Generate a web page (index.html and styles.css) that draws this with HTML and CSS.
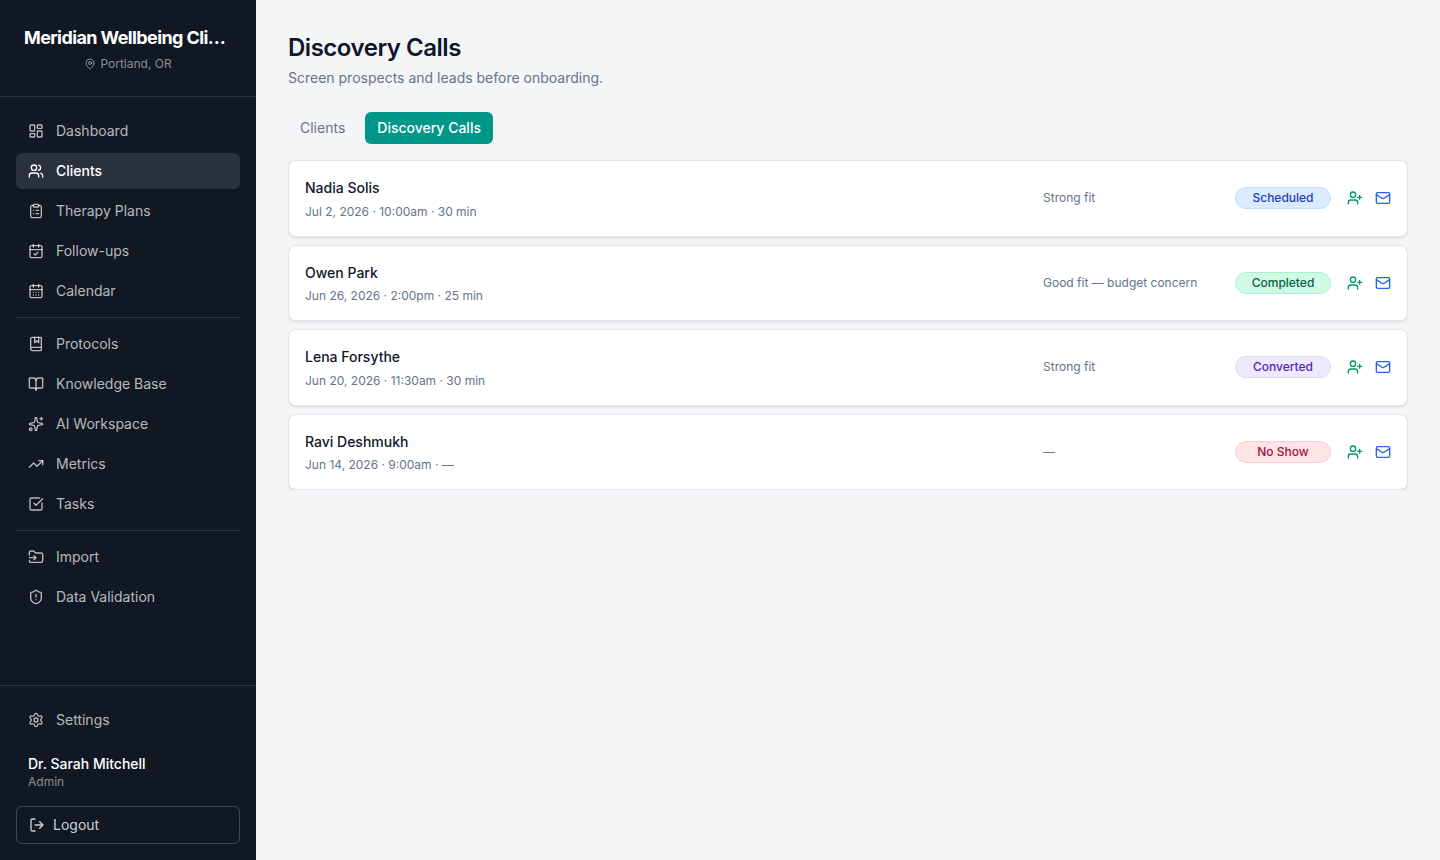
FILE: index.html
```html
<!DOCTYPE html>
<html lang="en">
<head>
<meta charset="utf-8">
<title>Discovery Calls</title>
<link rel="stylesheet" href="styles.css">
</head>
<body>
<svg class="sprite" aria-hidden="true">
  <symbol id="user-plus" viewBox="0 0 24 24"><path d="M16 21v-2a4 4 0 0 0-4-4H6a4 4 0 0 0-4 4v2"/><circle cx="9" cy="7" r="4"/><path d="M19 8v6M22 11h-6"/></symbol>
  <symbol id="mail" viewBox="0 0 24 24"><rect width="20" height="16" x="2" y="4" rx="2"/><path d="m22 7-8.97 5.7a1.94 1.94 0 0 1-2.06 0L2 7"/></symbol>
</svg>
<div class="app">
  <aside class="sidebar">
    <header class="brand">
      <div class="brand-name">Meridian Wellbeing Cli…</div>
      <div class="brand-place">
        <svg class="icon icon-pin" viewBox="0 0 24 24"><path d="M20 10c0 4.993-5.539 10.193-7.399 11.799a1 1 0 0 1-1.202 0C9.539 20.193 4 14.993 4 10a8 8 0 0 1 16 0"/><circle cx="12" cy="10" r="3"/></svg>
        <span>Portland, OR</span>
      </div>
    </header>
    <nav class="nav">
      <a class="nav-item"><svg class="icon" viewBox="0 0 24 24"><rect width="7" height="9" x="3" y="3" rx="1"/><rect width="7" height="5" x="14" y="3" rx="1"/><rect width="7" height="9" x="14" y="12" rx="1"/><rect width="7" height="5" x="3" y="16" rx="1"/></svg>Dashboard</a>
      <a class="nav-item active"><svg class="icon" viewBox="0 0 24 24"><path d="M16 21v-2a4 4 0 0 0-4-4H6a4 4 0 0 0-4 4v2"/><circle cx="9" cy="7" r="4"/><path d="M22 21v-2a4 4 0 0 0-3-3.870M16 3.130a4 4 0 0 1 0 7.750"/></svg>Clients</a>
      <a class="nav-item"><svg class="icon" viewBox="0 0 24 24"><rect width="8" height="4" x="8" y="2" rx="1"/><path d="M16 4h2a2 2 0 0 1 2 2v14a2 2 0 0 1-2 2H6a2 2 0 0 1-2-2V6a2 2 0 0 1 2-2h2M12 11h4M12 16h4M8 11h.01M8 16h.01"/></svg>Therapy Plans</a>
      <a class="nav-item"><svg class="icon" viewBox="0 0 24 24"><path d="M8 2v4M16 2v4"/><rect width="18" height="18" x="3" y="4" rx="2"/><path d="M3 10h18M9 16l2 2 4-4"/></svg>Follow-ups</a>
      <a class="nav-item"><svg class="icon" viewBox="0 0 24 24"><path d="M8 2v4M16 2v4"/><rect width="18" height="18" x="3" y="4" rx="2"/><path d="M3 10h18M8 14h.01M12 14h.01M16 14h.01M8 18h.01M12 18h.01M16 18h.01"/></svg>Calendar</a>
      <hr class="divider">
      <a class="nav-item"><svg class="icon" viewBox="0 0 24 24"><path d="M10 2v8l3-3 3 3V2"/><path d="M4 19.5v-15A2.5 2.5 0 0 1 6.500 2H19a1 1 0 0 1 1 1v18a1 1 0 0 1-1 1H6.500a1 1 0 0 1 0-5H20"/></svg>Protocols</a>
      <a class="nav-item"><svg class="icon" viewBox="0 0 24 24"><path d="M12 7v14"/><path d="M3 18a1 1 0 0 1-1-1V4a1 1 0 0 1 1-1h5a4 4 0 0 1 4 4 4 4 0 0 1 4-4h5a1 1 0 0 1 1 1v13a1 1 0 0 1-1 1h-6a3 3 0 0 0-3 3 3 3 0 0 0-3-3z"/></svg>Knowledge Base</a>
      <a class="nav-item"><svg class="icon" viewBox="0 0 24 24"><path d="M11.017 2.814a1 1 0 0 1 1.966 0l1.051 5.558a2 2 0 0 0 1.594 1.594l5.558 1.051a1 1 0 0 1 0 1.966l-5.558 1.051a2 2 0 0 0-1.594 1.594l-1.051 5.558a1 1 0 0 1-1.966 0l-1.051-5.558a2 2 0 0 0-1.594-1.594l-5.558-1.051a1 1 0 0 1 0-1.966l5.558-1.051a2 2 0 0 0 1.594-1.594z"/><path d="M20 2v4M22 4h-4"/><circle cx="4" cy="20" r="2"/></svg>AI Workspace</a>
      <a class="nav-item"><svg class="icon" viewBox="0 0 24 24"><path d="M16 7h6v6"/><path d="m22 7-8.500 8.500-5-5L2 17"/></svg>Metrics</a>
      <a class="nav-item"><svg class="icon" viewBox="0 0 24 24"><path d="M21 10.500V19a2 2 0 0 1-2 2H5a2 2 0 0 1-2-2V5a2 2 0 0 1 2-2h12.500"/><path d="m9 11 3 3L22 4"/></svg>Tasks</a>
      <hr class="divider">
      <a class="nav-item"><svg class="icon" viewBox="0 0 24 24"><path d="M2 9V5a2 2 0 0 1 2-2h3.900a2 2 0 0 1 1.690.900l.810 1.200a2 2 0 0 0 1.670.900H20a2 2 0 0 1 2 2v10a2 2 0 0 1-2 2H4a2 2 0 0 1-2-2v-1"/><path d="M2 13h10M9 16l3-3-3-3"/></svg>Import</a>
      <a class="nav-item"><svg class="icon" viewBox="0 0 24 24"><path d="M20 13c0 5-3.500 7.500-7.660 8.950a1 1 0 0 1-.670-.010C7.500 20.500 4 18 4 13V6a1 1 0 0 1 1-1c2 0 4.500-1.200 6.240-2.720a1.170 1.170 0 0 1 1.520 0C14.510 3.810 17 5 19 5a1 1 0 0 1 1 1z"/><path d="M12 8v4M12 16h.01"/></svg>Data Validation</a>
    </nav>
    <footer class="account">
      <a class="nav-item"><svg class="icon" viewBox="0 0 24 24"><path d="M9.671 4.136a2.340 2.340 0 0 1 4.659 0 2.340 2.340 0 0 0 3.319 1.915 2.340 2.340 0 0 1 2.330 4.033 2.340 2.340 0 0 0 0 3.831 2.340 2.340 0 0 1-2.330 4.033 2.340 2.340 0 0 0-3.319 1.915 2.340 2.340 0 0 1-4.659 0 2.340 2.340 0 0 0-3.320-1.915 2.340 2.340 0 0 1-2.330-4.033 2.340 2.340 0 0 0 0-3.831A2.340 2.340 0 0 1 6.350 6.051a2.340 2.340 0 0 0 3.319-1.915"/><circle cx="12" cy="12" r="3"/></svg>Settings</a>
      <div class="user">
        <div class="user-name">Dr. Sarah Mitchell</div>
        <div class="user-role">Admin</div>
      </div>
      <button class="logout"><svg class="icon" viewBox="0 0 24 24"><path d="m16 17 5-5-5-5M21 12H9M9 21H5a2 2 0 0 1-2-2V5a2 2 0 0 1 2-2h4"/></svg>Logout</button>
    </footer>
  </aside>
  <main class="main">
    <h1 class="title">Discovery Calls</h1>
    <p class="subtitle">Screen prospects and leads before onboarding.</p>
    <div class="tabs">
      <a class="tab">Clients</a>
      <a class="tab tab-active">Discovery Calls</a>
    </div>
    <section class="calls">
      <article class="call">
        <div class="call-info"><div class="call-name">Nadia Solis</div><div class="call-meta">Jul 2, 2026 · 10:00am · 30 min</div></div>
        <div class="call-note">Strong fit</div>
        <span class="badge badge-scheduled">Scheduled</span>
        <div class="actions"><svg class="icon convert"><use href="#user-plus"/></svg><svg class="icon email"><use href="#mail"/></svg></div>
      </article>
      <article class="call">
        <div class="call-info"><div class="call-name">Owen Park</div><div class="call-meta">Jun 26, 2026 · 2:00pm · 25 min</div></div>
        <div class="call-note">Good fit — budget concern</div>
        <span class="badge badge-completed">Completed</span>
        <div class="actions"><svg class="icon convert"><use href="#user-plus"/></svg><svg class="icon email"><use href="#mail"/></svg></div>
      </article>
      <article class="call">
        <div class="call-info"><div class="call-name">Lena Forsythe</div><div class="call-meta">Jun 20, 2026 · 11:30am · 30 min</div></div>
        <div class="call-note">Strong fit</div>
        <span class="badge badge-converted">Converted</span>
        <div class="actions"><svg class="icon convert"><use href="#user-plus"/></svg><svg class="icon email"><use href="#mail"/></svg></div>
      </article>
      <article class="call">
        <div class="call-info"><div class="call-name">Ravi Deshmukh</div><div class="call-meta">Jun 14, 2026 · 9:00am · —</div></div>
        <div class="call-note">—</div>
        <span class="badge badge-noshow">No Show</span>
        <div class="actions"><svg class="icon convert"><use href="#user-plus"/></svg><svg class="icon email"><use href="#mail"/></svg></div>
      </article>
    </section>
  </main>
</div>
</body>
</html>
```
FILE: styles.css
```css
* { box-sizing: border-box; }
body { margin: 0; font-family: Inter, "Liberation Sans", sans-serif; font-size: 14px; line-height: 20px; color: #0f172a; background: #f4f5f7; }
.sprite { display: none; }
.app { display: flex; height: 100vh; overflow: hidden; }
.icon { width: 16px; height: 16px; flex: none; fill: none; stroke: currentColor; stroke-width: 2; stroke-linecap: round; stroke-linejoin: round; }

.sidebar { display: flex; flex-direction: column; width: 256px; flex: none; background: #111824; color: #fff; }
.brand { height: 97px; padding: 24px; border-bottom: 1px solid rgba(255, 255, 255, .12); text-align: center; }
.brand-name { width: 202px; font-size: 18px; line-height: 28px; font-weight: 700; letter-spacing: -.61px; text-align: left; white-space: nowrap; }
.brand-place { display: flex; justify-content: center; align-items: center; gap: 4px; margin-top: 4px; font-size: 12px; line-height: 16px; color: rgba(255, 255, 255, .5); }
.icon-pin { width: 12px; height: 12px; }
.nav { flex: 1; display: flex; flex-direction: column; gap: 4px; padding: 16px; }
.nav-item { display: flex; align-items: center; gap: 12px; height: 36px; padding: 0 12px; border-radius: 6px; color: rgba(255, 255, 255, .7); }
.nav-item.active { background: rgba(255, 255, 255, .11); color: #fff; font-weight: 500; }
.divider { width: 100%; height: 1px; margin: 4px 0; border: 0; background: rgba(255, 255, 255, .12); }
.account { padding: 16px; border-top: 1px solid rgba(255, 255, 255, .12); }
.user { padding: 16px 12px; }
.user-name { font-weight: 500; }
.user-role { font-size: 12px; line-height: 16px; color: rgba(255, 255, 255, .5); }
.logout { display: flex; align-items: center; gap: 8px; width: 100%; height: 38px; padding: 0 12px; border: 1px solid rgba(255, 255, 255, .2); border-radius: 6px; background: none; color: rgba(255, 255, 255, .8); font: inherit; }

.main { flex: 1; padding: 32px; }
.title { margin: 0; font-size: 24px; line-height: 32px; font-weight: 600; letter-spacing: -.48px; }
.subtitle { margin: 4px 0 0; color: #64748b; }
.tabs { display: flex; gap: 8px; margin-top: 24px; }
.tab { padding: 6px 12px; border-radius: 6px; color: #64748b; }
.tab-active { background: #009688; color: #fff; font-weight: 500; }
.calls { display: flex; flex-direction: column; gap: 8px; margin-top: 16px; overflow: hidden; }
.call { display: flex; align-items: center; height: 76.5px; padding: 0 16px; background: #fff; border: 1px solid #e2e6ec; border-radius: 8px; box-shadow: 0 1px 3px rgba(0, 0, 0, .1), 0 1px 2px -1px rgba(0, 0, 0, .1); }
.call-info { flex: 1; }
.call-name { line-height: 22.5px; font-weight: 500; }
.call-meta { margin-top: 4px; font-size: 12px; line-height: 16px; color: #64748b; }
.call-note { width: 176px; margin-right: 16px; font-size: 12px; line-height: 16px; color: #64748b; }
.badge { width: 96px; height: 22px; border: 1px solid; border-radius: 11px; font-size: 12px; line-height: 20px; font-weight: 500; text-align: center; }
.badge-scheduled { background: #dbeafe; border-color: #bfdbfe; color: #1e40af; }
.badge-completed { background: #d1fae5; border-color: #a7f3d0; color: #065f46; }
.badge-converted { background: #ede9fe; border-color: #ddd6fe; color: #5b21b6; }
.badge-noshow { background: #ffe4e6; border-color: #fecdd3; color: #9f1239; }
.actions { display: flex; gap: 12px; margin-left: 16px; }
.convert { color: #059669; }
.email { color: #2563eb; }
```
